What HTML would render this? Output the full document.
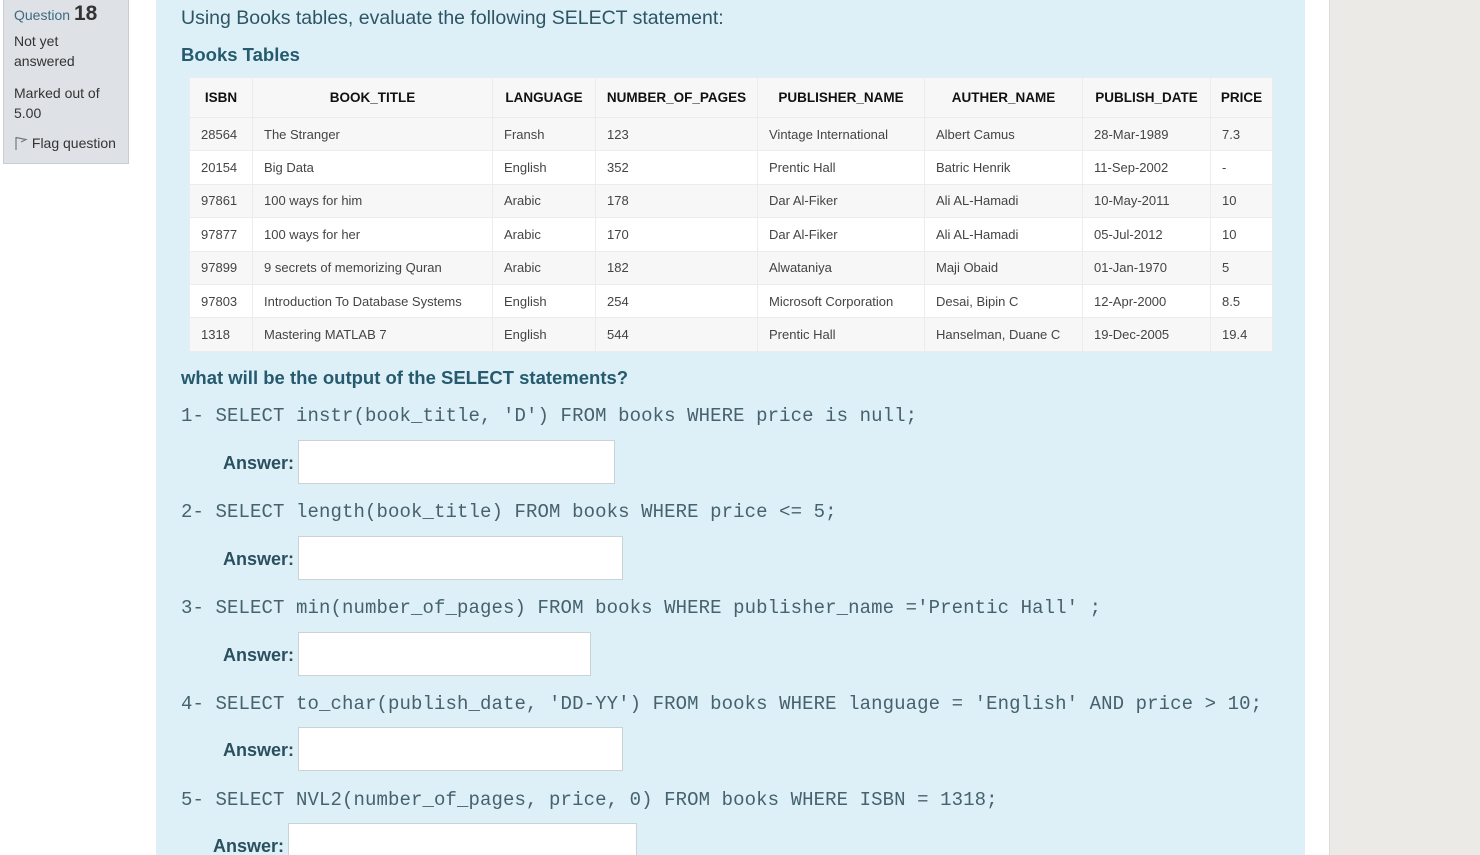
<!DOCTYPE html>
<html style="overflow:hidden;height:855px"><head><meta charset="utf-8"><style>
body{margin:0;width:1480px;height:855px;overflow:hidden;background:#fff;font-family:"Liberation Sans",sans-serif;position:relative}
.side{position:absolute;left:3px;top:-2px;width:124px;height:164px;background:#dee2e6;border:1px solid #c8cdd2;color:#333;font-size:14px}
.side div{position:absolute;left:10px}
.main{position:absolute;left:156px;top:0;width:1149px;height:855px;background:#def0f7;color:#2a4f5e;overflow:hidden}
.right{position:absolute;left:1329px;top:0;width:151px;height:855px;background:#ebeae7;border-left:1px solid #dcdcdc}
.abs{position:absolute}
table{position:absolute;left:33px;top:77px;border-collapse:collapse;font-size:13px;color:#444;table-layout:fixed}
td,th{border:1px solid #ececec;padding:0 0 0 11px;text-align:left;height:32.4px;white-space:nowrap}
th{height:39px;font-size:13.5px;color:#111;text-align:center;padding:0;background:#f7f7f7}
tr:nth-child(even) td{background:#f7f7f7}
tr:nth-child(odd) td{background:#fff}
.code{position:absolute;left:25px;font-family:"Liberation Mono",monospace;font-size:19px;letter-spacing:0.1px;color:#45626e;white-space:pre}
.lab{position:absolute;font-weight:bold;font-size:18px;color:#2a4f5e;text-align:right}
.box{position:absolute;background:#fff;border:1px solid #c9d2d6}
</style></head><body>
<div class="side">
<div style="top:3px;color:#3e6a80;font-size:14px">Question <b style="font-size:21px;color:#333">18</b></div>
<div style="top:32px;line-height:20px">Not yet<br>answered</div>
<div style="top:84px;line-height:20px">Marked out of<br>5.00</div>
<div style="top:136px"><svg width="14" height="14" viewBox="0 0 14 14" style="vertical-align:-2px"><path d="M2 1v13M2 1.5l10 2-5 2.5" fill="none" stroke="#777" stroke-width="1.2"/></svg> Flag question</div>
</div>
<div class="main">
<div class="abs" style="left:25px;top:7px;font-size:19.5px;color:#2e5566">Using Books tables, evaluate the following SELECT statement:</div>
<div class="abs" style="left:25px;top:44px;font-size:18.5px;font-weight:bold;color:#265a6e">Books Tables</div>
<table>
<colgroup><col style="width:63px"><col style="width:240px"><col style="width:103px"><col style="width:162px"><col style="width:167px"><col style="width:158px"><col style="width:128px"><col style="width:62px"></colgroup>
<tr><th>ISBN</th><th>BOOK_TITLE</th><th>LANGUAGE</th><th>NUMBER_OF_PAGES</th><th>PUBLISHER_NAME</th><th>AUTHER_NAME</th><th>PUBLISH_DATE</th><th>PRICE</th></tr>
<tr><td>28564</td><td>The Stranger</td><td>Fransh</td><td>123</td><td>Vintage International</td><td>Albert Camus</td><td>28-Mar-1989</td><td>7.3</td></tr>
<tr><td>20154</td><td>Big Data</td><td>English</td><td>352</td><td>Prentic Hall</td><td>Batric Henrik</td><td>11-Sep-2002</td><td>-</td></tr>
<tr><td>97861</td><td>100 ways for him</td><td>Arabic</td><td>178</td><td>Dar Al-Fiker</td><td>Ali AL-Hamadi</td><td>10-May-2011</td><td>10</td></tr>
<tr><td>97877</td><td>100 ways for her</td><td>Arabic</td><td>170</td><td>Dar Al-Fiker</td><td>Ali AL-Hamadi</td><td>05-Jul-2012</td><td>10</td></tr>
<tr><td>97899</td><td>9 secrets of memorizing Quran</td><td>Arabic</td><td>182</td><td>Alwataniya</td><td>Maji Obaid</td><td>01-Jan-1970</td><td>5</td></tr>
<tr><td>97803</td><td>Introduction To Database Systems</td><td>English</td><td>254</td><td>Microsoft Corporation</td><td>Desai, Bipin C</td><td>12-Apr-2000</td><td>8.5</td></tr>
<tr><td>1318</td><td>Mastering MATLAB 7</td><td>English</td><td>544</td><td>Prentic Hall</td><td>Hanselman, Duane C</td><td>19-Dec-2005</td><td>19.4</td></tr>
</table>
<div class="abs" style="left:25px;top:367px;font-size:18.5px;font-weight:bold;color:#265a6e">what will be the output of the SELECT statements?</div>
<div class="code" style="top:405px">1- SELECT instr(book_title, 'D') FROM books WHERE price is null;</div>
<div class="lab" style="left:40px;top:453px;width:98px">Answer:</div><div class="box" style="left:142px;top:440px;width:315px;height:42px"></div>
<div class="code" style="top:501px">2- SELECT length(book_title) FROM books WHERE price &lt;= 5;</div>
<div class="lab" style="left:40px;top:549px;width:98px">Answer:</div><div class="box" style="left:142px;top:536px;width:323px;height:42px"></div>
<div class="code" style="top:597px">3- SELECT min(number_of_pages) FROM books WHERE publisher_name ='Prentic Hall' ;</div>
<div class="lab" style="left:40px;top:645px;width:98px">Answer:</div><div class="box" style="left:142px;top:632px;width:291px;height:42px"></div>
<div class="code" style="top:693px">4- SELECT to_char(publish_date, 'DD-YY') FROM books WHERE language = 'English' AND price &gt; 10;</div>
<div class="lab" style="left:40px;top:740px;width:98px">Answer:</div><div class="box" style="left:142px;top:727px;width:323px;height:42px"></div>
<div class="code" style="top:789px">5- SELECT NVL2(number_of_pages, price, 0) FROM books WHERE ISBN = 1318;</div>
<div class="lab" style="left:30px;top:836px;width:98px">Answer:</div><div class="box" style="left:132px;top:823px;width:347px;height:42px"></div>
</div>
<div class="right"></div>
</body></html>
